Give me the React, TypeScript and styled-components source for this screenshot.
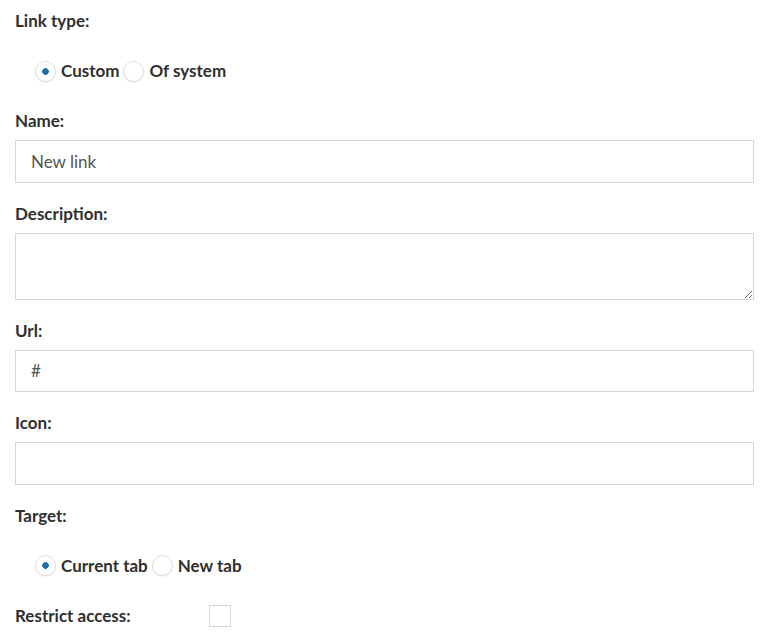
import styled, { createGlobalStyle } from "styled-components"

const GlobalStyle = createGlobalStyle`
    body {
        margin: 0;
        background: #fff;
        font-family: Lato, "Source Sans Pro", sans-serif;
        color: #2f2f2f;
    }
`

export default function App() {
    return (
        <>
            <GlobalStyle />
            <Form>
                <Label>Link type:</Label>
                <RadioGroup>
                    <RadioOption>
                        <Radio $checked />
                        Custom
                    </RadioOption>
                    <RadioOption>
                        <Radio />
                        Of system
                    </RadioOption>
                </RadioGroup>

                <Field>
                    <Label>Name:</Label>
                    <Input defaultValue="New link" />
                </Field>

                <Field>
                    <Label>Description:</Label>
                    <TextArea />
                </Field>

                <Field>
                    <Label>Url:</Label>
                    <Input defaultValue="#" />
                </Field>

                <Field>
                    <Label>Icon:</Label>
                    <Input />
                </Field>

                <Label>Target:</Label>
                <RadioGroup>
                    <RadioOption>
                        <Radio $checked />
                        Current tab
                    </RadioOption>
                    <RadioOption>
                        <Radio />
                        New tab
                    </RadioOption>
                </RadioGroup>

                <CheckRow>
                    <CheckLabel>Restrict access:</CheckLabel>
                    <CheckBox />
                </CheckRow>
            </Form>
        </>
    )
}

const Form = styled.form`
    padding: 10px 19px 0 15px;
`
const Field = styled.div`
    margin-bottom: 20px;
`
const Label = styled.div`
    font-size: 17px;
    font-weight: 700;
    line-height: 22px;
    margin-bottom: 8px;
`
const RadioGroup = styled.div`
    display: flex;
    align-items: center;
    gap: 4px;
    padding-left: 20px;
    margin: 29px 0;
    height: 20px;
`
const RadioOption = styled.label`
    display: flex;
    align-items: center;
    gap: 5px;
    font-size: 17px;
    font-weight: 700;
    line-height: 20px;
`
const Radio = styled.span<{ $checked?: boolean }>`
    width: 21px;
    height: 21px;
    box-sizing: border-box;
    border-radius: 50%;
    border: 1px solid #dcdcdc;
    box-shadow: 0 1px 1px rgba(0, 0, 0, 0.06);
    background: ${(p) => (p.$checked ? "radial-gradient(circle, #1d6fa5 0 3px, #fff 3.6px)" : "#fff")};
`
const Input = styled.input`
    display: block;
    width: 100%;
    height: 42.5px;
    box-sizing: border-box;
    border: 1px solid #d2d6de;
    padding: 0 15px;
    font-family: inherit;
    font-size: 17px;
    color: #555;
    outline: none;
`
const TextArea = styled.textarea`
    display: block;
    width: 100%;
    height: 67px;
    box-sizing: border-box;
    border: 1px solid #d2d6de;
    padding: 8px 15px;
    font-family: inherit;
    font-size: 17px;
    outline: none;
`
const CheckRow = styled.div`
    display: flex;
    align-items: center;
`
const CheckLabel = styled.span`
    width: 194px;
    font-size: 17px;
    font-weight: 700;
    line-height: 22px;
`
const CheckBox = styled.span`
    width: 22px;
    height: 22px;
    box-sizing: border-box;
    border: 1px solid #d8d8d8;
    background: #fff;
`
